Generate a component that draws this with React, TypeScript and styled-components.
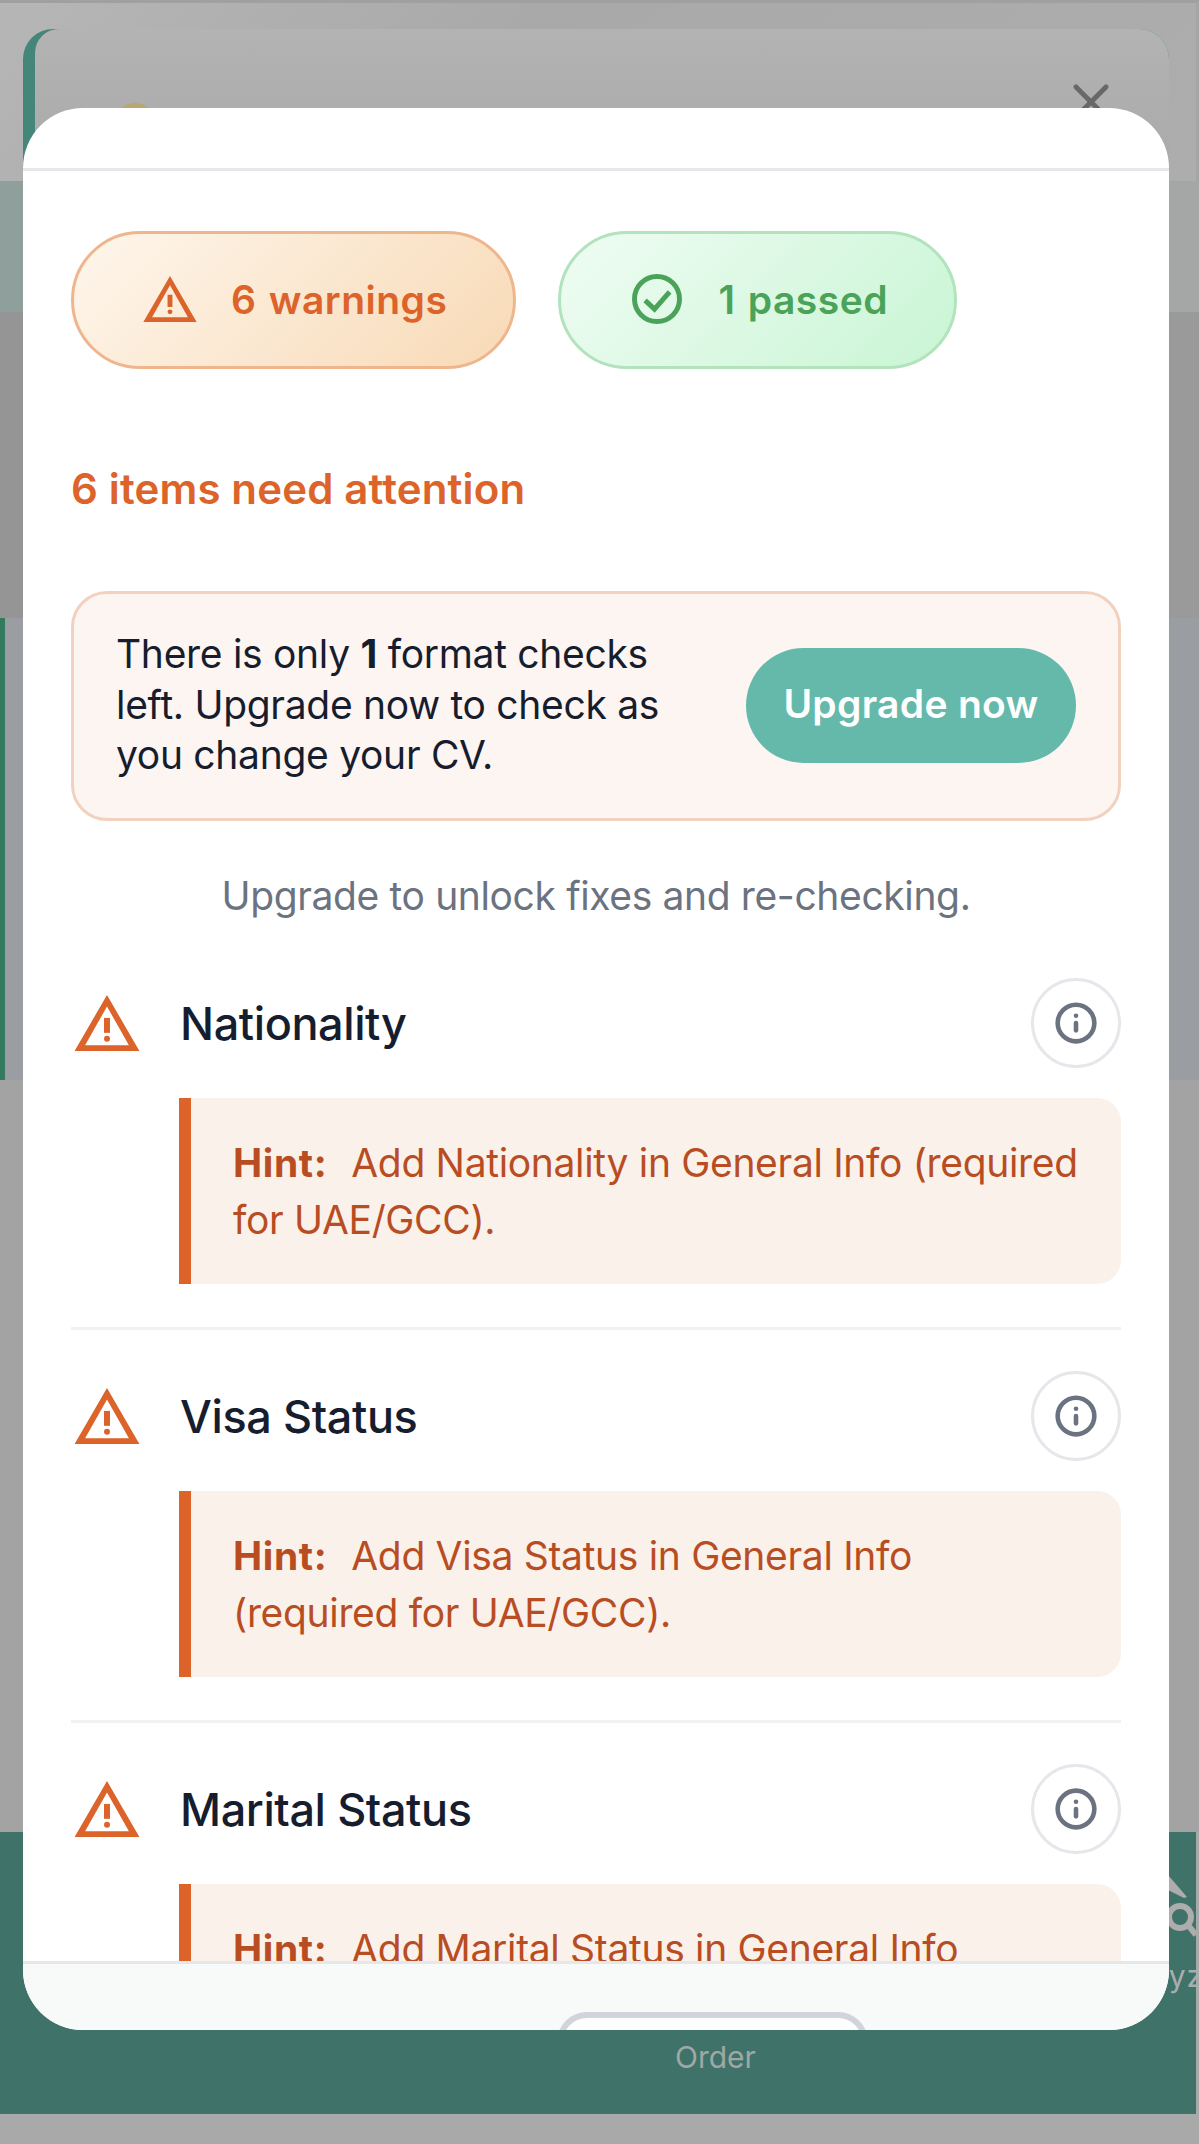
import React from 'react';
import styled, { createGlobalStyle } from 'styled-components';
import { Info, X } from 'lucide-react';

const GlobalStyle = createGlobalStyle`
html, body {
  margin: 0;
  padding: 0;
}
body {
  font-family: Inter, "Liberation Sans", sans-serif;
  background: #adadad;
}
`;

const Page = styled.div`
position: relative;
width: 1199px;
height: 2144px;
overflow: hidden;
background: #a9a9a9;
display: flex;
flex-direction: column;
`;

const TopArea = styled.div`
height: 181px;
padding: 26px 27px 0 23px;
border-top: 3px solid #a0a0a0;
border-right: 3px solid #a5a5a5;
box-sizing: border-box;
background: linear-gradient(135deg, #b6b6b6, #a9a9a9 40%, #adadad);
display: flex;
flex-shrink: 0;
`;

const BackCardShell = styled.div`
flex: 1;
display: flex;
padding-left: 12px;
border-radius: 30px 30px 0 0;
background: #44867a;
`;

const BackCard = styled.div`
flex: 1;
border-radius: 24px 30px 0 0;
background: linear-gradient(180deg, #b3b3b3, #a9a9a9);
display: flex;
justify-content: space-between;
padding: 0 48px 0 79px;
`;

const CoinDot = styled.div`
width: 42px;
height: 42px;
margin-top: 74px;
border-radius: 50%;
background: #b8a76f;
`;

const CloseGhost = styled.div`
margin-top: 43px;
color: #686868;
`;

const TealBand = styled.div`
height: 131px;
background: linear-gradient(90deg, #8f9f9c, #a5a6a6);
flex-shrink: 0;
`;

const MiddleArea = styled.div`
flex: 1;
background: #a3a3a3;
display: flex;
flex-direction: column;
`;

const UpperFill = styled.div`
height: 306px;
background: linear-gradient(90deg, #959595, #9a9a9a);
`;

const SideStripe = styled.div`
height: 462px;
background: #9a9ea3;
border-left: 5px solid #35795f;
`;

const BottomNav = styled.div`
height: 282px;
flex-shrink: 0;
background: #3f7268;
margin-right: 3px;
position: relative;
`;

const NavLabel = styled.span`
position: absolute;
left: 675px;
top: 207px;
color: #a0a8a5;
font-size: 30px;
`;

const NavIcon = styled.svg`
position: absolute;
left: 1165px;
top: 38px;
color: #adadad;
`;

const NavCut = styled(NavLabel)`
left: 1102px;
top: 126px;
letter-spacing: 1px;
color: #a8aeac;
`;

const BottomGap = styled.div`
height: 30px;
flex-shrink: 0;
background: #a9a9a9;
`;

const Modal = styled.div`
position: absolute;
left: 23px;
top: 108px;
width: 1146px;
height: 1922px;
border-radius: 60px;
overflow: hidden;
background: #fff;
display: flex;
flex-direction: column;
`;

const ModalHeader = styled.div`
height: 60px;
flex-shrink: 0;
border-bottom: 3px solid #e5e7eb;
`;

const ModalBody = styled.div`
flex: 1;
overflow: hidden;
padding: 60px 48px 0;
min-height: 0;
`;

const PillRow = styled.div`
display: flex;
gap: 42px;
`;

const Pill = styled.div<{ $tone: 'warn' | 'pass' }>`
height: 138px;
box-sizing: border-box;
border-radius: 69px;
border: 3px solid ${({ $tone }) => ($tone === 'warn' ? '#efb68e' : '#b2e3bd')};
background: ${({ $tone }) => ($tone === 'warn'
    ? 'linear-gradient(135deg, #fef6ec, #f8dab6)'
    : 'linear-gradient(135deg, #effcf3, #c9f5d4)')};
color: ${({ $tone }) => ($tone === 'warn' ? '#dc6329' : '#4aa358')};
display: flex;
align-items: center;
padding: 0 66px 2px 69px;
gap: 34px;
font-size: 39px;
font-weight: 600;
letter-spacing: 0.5px;
word-spacing: 2px;
`;

const AttentionTitle = styled.h2`
margin: 94px 0 0;
color: #dc6329;
font-size: 42px;
line-height: 52px;
font-weight: 600;
letter-spacing: 0.15px;
`;

const UpgradeBox = styled.div`
margin-top: 76px;
height: 230px;
box-sizing: border-box;
border: 3px solid #f2d2bf;
border-radius: 36px;
background: #fdf5f1;
display: flex;
align-items: center;
justify-content: space-between;
padding: 0 42px 2px;
`;

const UpgradeText = styled.p`
margin: 0;
width: 560px;
color: #161d2e;
font-size: 39px;
line-height: 50.500px;
letter-spacing: -0.3px;
strong {
  font-weight: 700;
}
`;

const UpgradeButton = styled.button`
width: 330px;
height: 115px;
border: none;
border-radius: 58px;
background: #65b9ab;
color: #fff;
font-family: inherit;
font-size: 39px;
font-weight: 600;
letter-spacing: 0.3px;
padding: 0 0 3px;
`;

const UpsellNote = styled.p`
margin: 50px 0 0;
text-align: center;
color: #6b7280;
font-size: 39px;
line-height: 50px;
letter-spacing: -0.37px;
`;

const CheckList = styled.div`
margin-top: 58px;
`;

const CheckItem = styled.div`
padding-bottom: 43px;
margin-bottom: 42px;
border-bottom: 3px solid #f0f1f3;
`;

const CheckHead = styled.div`
display: flex;
align-items: center;
justify-content: space-between;
height: 88px;
`;

const CheckName = styled.div`
display: flex;
align-items: center;
gap: 40px;
padding-left: 3px;
color: #161d2e;
font-size: 45px;
font-weight: 500;
letter-spacing: -0.4px;
`;

const InfoButton = styled.div`
width: 90px;
height: 90px;
box-sizing: border-box;
border: 3px solid #e5e7eb;
border-radius: 50%;
display: flex;
align-items: center;
justify-content: center;
color: #6b7280;
`;

const Hint = styled.div`
margin: 31px 0 0 108px;
border-left: 12px solid #dc6329;
border-radius: 0 24px 24px 0;
background: #faf1eb;
color: #b94d22;
padding: 36px 38px 36px 42px;
font-size: 39px;
line-height: 57px;
letter-spacing: -0.33px;
strong {
  font-weight: 700;
  letter-spacing: 0.6px;
  margin-right: 24px;
}
`;

const ModalFooter = styled.div`
height: 69px;
flex-shrink: 0;
box-sizing: border-box;
border-top: 3px solid #e5e7eb;
background: #f8faf9;
display: flex;
justify-content: center;
padding: 48px 0 0 232px;
overflow: hidden;
`;

const FooterButton = styled.div`
width: 311px;
height: 115px;
box-sizing: border-box;
border: 6px solid #d1d5db;
border-radius: 30px;
background: #fff;
`;

const WarnIcon = ({ size }: { size: number }) => (
  <svg width={size} height={size * 0.86} viewBox="0 0 66 57" fill="#dc6329" style={{ flexShrink: 0 }}>
    <path fillRule="evenodd" d="M33 0 66 57H0ZM33 11.500 11 50.500h44Z" />
    <rect x="30" y="23" width="6" height="15" />
    <circle cx="33" cy="44" r="3" />
  </svg>
);

const PassIcon = () => (
  <svg width={54} height={54} viewBox="0 0 24 24" fill="none" stroke="currentColor" strokeWidth={2.2} style={{ flexShrink: 0 }}>
    <circle cx="12" cy="12" r="10" />
    <path d="M6.700 12.600l4.200 3.900 6.700-7.700" />
  </svg>
);

const checks = [
  { name: 'Nationality', hint: 'Add Nationality in General Info (required for UAE/GCC).' },
  { name: 'Visa Status', hint: 'Add Visa Status in General Info (required for UAE/GCC).' },
  { name: 'Marital Status', hint: 'Add Marital Status in General Info (required for UAE/GCC).' },
];

const App = () => (
  <>
    <GlobalStyle />
    <Page>
      <TopArea>
        <BackCardShell>
          <BackCard>
            <CoinDot />
            <CloseGhost><X size={60} strokeWidth={2} /></CloseGhost>
          </BackCard>
        </BackCardShell>
      </TopArea>
      <TealBand />
      <MiddleArea>
        <UpperFill />
        <SideStripe />
      </MiddleArea>
      <BottomNav>
        <NavLabel>Order</NavLabel>
        <NavIcon width={31} height={72} viewBox="0 0 31 72" fill="none" stroke="currentColor" strokeWidth={6}>
          <path d="M3 5 22 27 19 28 3 20Z" fill="currentColor" strokeWidth={0} />
          <circle cx="15" cy="47" r="11" />
          <path d="M23 55 31 65" />
        </NavIcon>
        <NavCut>Analyze</NavCut>
      </BottomNav>
      <BottomGap />
      <Modal>
        <ModalHeader />
        <ModalBody>
          <PillRow>
            <Pill $tone="warn"><WarnIcon size={54} />6 warnings</Pill>
            <Pill $tone="pass"><PassIcon />1 passed</Pill>
          </PillRow>
          <AttentionTitle>6 items need attention</AttentionTitle>
          <UpgradeBox>
            <UpgradeText>There is only <strong>1</strong> format checks left. Upgrade now to check as you change your CV.</UpgradeText>
            <UpgradeButton>Upgrade now</UpgradeButton>
          </UpgradeBox>
          <UpsellNote>Upgrade to unlock fixes and re-checking.</UpsellNote>
          <CheckList>
            {checks.map((check) => (
              <CheckItem key={check.name}>
                <CheckHead>
                  <CheckName><WarnIcon size={66} />{check.name}</CheckName>
                  <InfoButton><Info size={44} strokeWidth={2.5} /></InfoButton>
                </CheckHead>
                <Hint><strong>Hint:</strong>{check.hint}</Hint>
              </CheckItem>
            ))}
          </CheckList>
        </ModalBody>
        <ModalFooter><FooterButton /></ModalFooter>
      </Modal>
    </Page>
  </>
);

export default App;
